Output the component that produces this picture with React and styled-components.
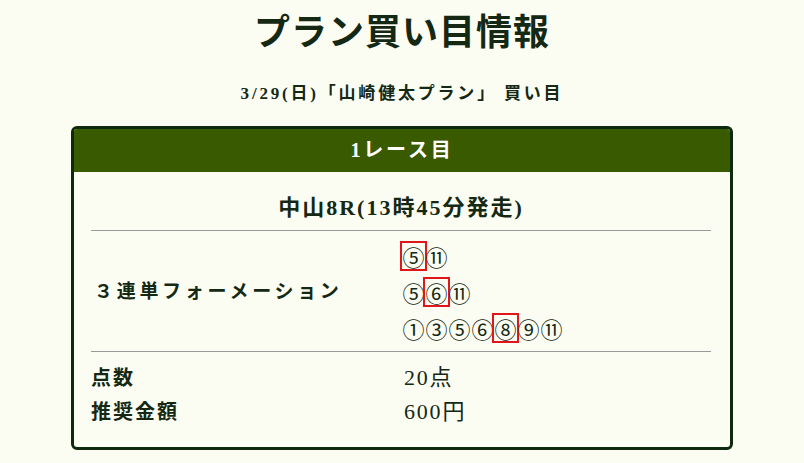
import React from "react";
import styled, { createGlobalStyle } from "styled-components";

const GlobalStyle = createGlobalStyle`
  html, body {
    margin: 0;
    padding: 0;
    background: #fbfdf2;
  }
  body {
    font-family: "Liberation Serif", "Noto Sans CJK JP", serif;
    color: #142814;
  }
`;

const Page = styled.div`
  width: 804px;
  min-height: 463px;
  display: flex;
  flex-direction: column;
  align-items: center;
  padding-top: 11px;
  box-sizing: border-box;
`;

const Title = styled.h1`
  margin: 0;
  font-size: 36px;
  line-height: 44px;
  font-weight: 700;
  letter-spacing: 1px;
`;

const SubTitle = styled.h2`
  margin: 27px 0 0;
  font-size: 17px;
  line-height: 24px;
  font-weight: 700;
  letter-spacing: 2.8px;
`;

const Card = styled.section`
  margin-top: 20px;
  width: 662px;
  box-sizing: border-box;
  border: 3px solid #0e2a0e;
  border-radius: 6px;
  overflow: hidden;
  background: #fbfdf2;
`;

const CardHeader = styled.div`
  background: #3a5a00;
  color: #ffffff;
  text-align: center;
  font-size: 20px;
  font-weight: 700;
  line-height: 43px;
  letter-spacing: 2.8px;
`;

const CardBody = styled.div`
  padding: 0 19px 18px 17px;
`;

const RaceName = styled.div`
  text-align: center;
  font-size: 22px;
  font-weight: 700;
  line-height: 24px;
  letter-spacing: 2px;
  padding: 24px 0 10px;
  border-bottom: 1px solid #9a9a9a;
`;

const Row = styled.div`
  display: grid;
  grid-template-columns: 311px 1fr;
  align-items: center;
  padding: ${(p) => p.pad || "0"};
  border-bottom: ${(p) => (p.divider ? "1px solid #9a9a9a" : "none")};
`;

const Label = styled.div`
  font-size: ${(p) => (p.wide ? "19px" : "20px")};
  font-weight: 700;
  line-height: 34px;
  letter-spacing: ${(p) => (p.wide ? "3.7px" : "2px")};
  padding-left: ${(p) => (p.wide ? "3px" : "0")};
`;

const Value = styled.div`
  font-size: 22px;
  line-height: 34px;
  letter-spacing: 1.8px;
  padding-left: 2px;
`;

const Lines = styled.div`
  display: flex;
  flex-direction: column;
`;

const NumLine = styled.div`
  height: 36px;
  display: flex;
  align-items: center;
`;

const Num = styled.span`
  display: inline-flex;
  align-items: center;
  justify-content: center;
  width: 23px;
  height: 26px;
  font-family: "Noto Sans CJK JP", sans-serif;
  font-size: 22px;
  line-height: 1;
  box-sizing: border-box;
  outline: ${(p) => (p.picked ? "2px solid #e0161b" : "none")};
`;

const formation = [
  { nums: ["⑤", "⑪"], pick: 0 },
  { nums: ["⑤", "⑥", "⑪"], pick: 1 },
  { nums: ["①", "③", "⑤", "⑥", "⑧", "⑨", "⑪"], pick: 4 },
];

const App = () => {
  return (
    <>
      <GlobalStyle />
      <Page>
        <Title>プラン買い目情報</Title>
        <SubTitle>3/29(日)「山崎健太プラン」 買い目</SubTitle>
        <Card>
          <CardHeader>1レース目</CardHeader>
          <CardBody>
            <RaceName>中山8R(13時45分発走)</RaceName>
            <Row divider pad="7px 0 5px">
              <Label wide>３連単フォーメーション</Label>
              <Lines>
                {formation.map((line, i) => (
                  <NumLine key={i}>
                    {line.nums.map((n, j) => (
                      <Num key={j} picked={j === line.pick}>
                        {n}
                      </Num>
                    ))}
                  </NumLine>
                ))}
              </Lines>
            </Row>
            <Row pad="9px 0 0">
              <Label>点数</Label>
              <Value>20点</Value>
              <Label>推奨金額</Label>
              <Value>600円</Value>
            </Row>
          </CardBody>
        </Card>
      </Page>
    </>
  );
};

export default App;
